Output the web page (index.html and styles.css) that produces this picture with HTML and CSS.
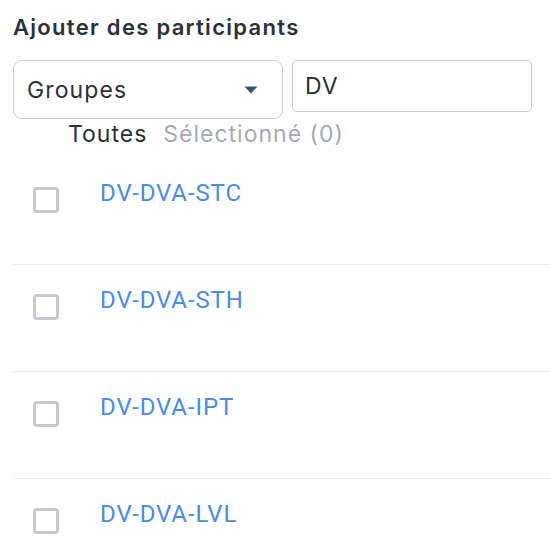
FILE: index.html
```html
<!DOCTYPE html>
<html lang="fr">
<head>
<meta charset="utf-8">
<link rel="stylesheet" href="styles.css">
</head>
<body>
<div class="panel">
  <h1 class="title">Ajouter des participants</h1>
  <div class="filters">
    <div class="select">
      <span>Groupes</span>
      <svg class="caret" width="14" height="8" viewBox="0 0 14 8"><path d="M0.5 0.5 L13.5 0.5 L7 7.5 Z" fill="#3e5366"/></svg>
    </div>
    <div class="search">DV</div>
  </div>
  <div class="tabs">
    <span class="tab active">Toutes</span>
    <span class="tab">Sélectionné (0)</span>
  </div>
  <ul class="list">
    <li class="item"><span class="check"></span><a class="name">DV-DVA-STC</a></li>
    <li class="item"><span class="check"></span><a class="name">DV-DVA-STH</a></li>
    <li class="item"><span class="check"></span><a class="name">DV-DVA-IPT</a></li>
    <li class="item"><span class="check"></span><a class="name">DV-DVA-LVL</a></li>
  </ul>
</div>
</body>
</html>
```
FILE: styles.css
```css
html, body { margin: 0; padding: 0; background: #fff; }
body { font-family: Inter, "Noto Sans", sans-serif; color: #2b303b; }
.panel { padding: 13px 0 0 13px; }
.title { margin: 0; font-size: 22px; font-weight: 600; line-height: 28px; color: #2b303b; letter-spacing: 1.3px; }
.filters { display: flex; gap: 9px; margin-top: 19px; align-items: flex-start; }
.select { box-sizing: border-box; width: 270px; height: 59px; border: 1px solid #c9cdd3; border-radius: 9px; display: flex; align-items: center; justify-content: space-between; padding: 0 24px 0 13px; font-size: 23px; letter-spacing: 1.1px; }
.caret { display: block; }
.search { box-sizing: border-box; width: 240px; height: 52px; border: 1px solid #c9cdd3; border-radius: 5px; padding: 0 12px; font-size: 23px; letter-spacing: 1px; display: flex; align-items: center; }
.tabs { display: flex; gap: 16px; padding-left: 55px; margin-top: 1px; font-size: 23px; line-height: 28px; letter-spacing: 1px; }
.tab { color: #a3aab6; }
.tab.active { color: #2b303b; }
.list { list-style: none; margin: 9px 0 0; padding: 0; }
.item { display: flex; align-items: flex-start; height: 107px; border-bottom: 1px solid #ececec; box-sizing: border-box; padding-top: 22px; }
.item:first-child { height: 108px; padding-top: 23px; }
.item:last-child { border-bottom: none; height: auto; padding-bottom: 10px; }
.check { box-sizing: border-box; width: 26px; height: 26px; border: 3px solid #c6c9cd; border-radius: 4px; margin: 7px 0 0 20px; flex: none; }
.name { margin: -2px 0 0 41px; font-family: Roboto, sans-serif; font-size: 24px; line-height: 30px; letter-spacing: 0.9px; color: #4a8be6; }
```
